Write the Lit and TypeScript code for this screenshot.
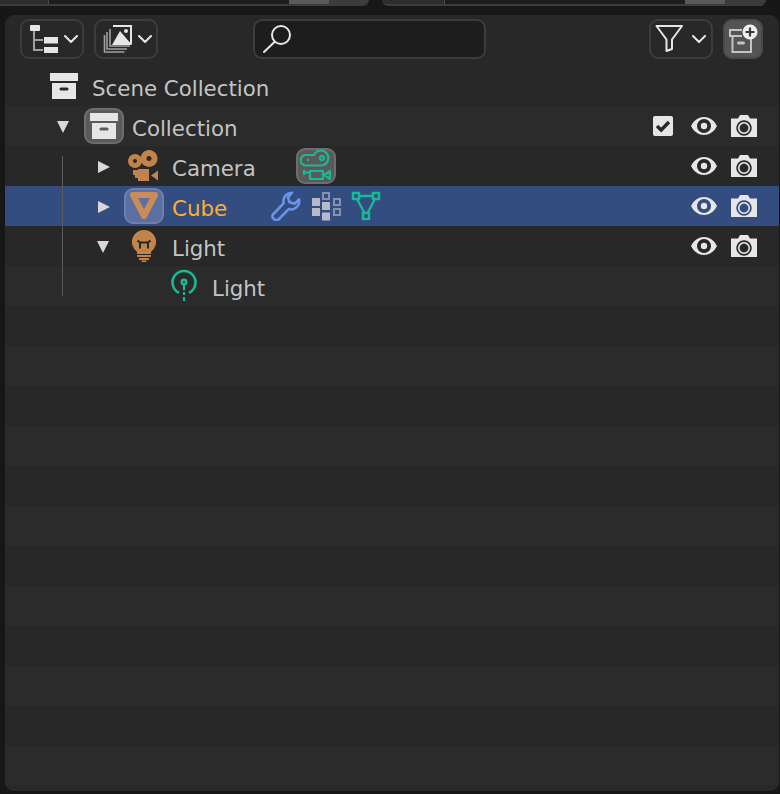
import { LitElement, html, css } from "lit";
import { customElement } from "lit/decorators.js";

const LIGHT = "#e6e6e6";
const ORANGE = "#c0834a";
const TEAL = "#1ab894";

const box = () => html`<svg class="ic" viewBox="0 0 28 26"><path fill="${LIGHT}" d="M0 0h28v8H0z"/><path fill="${LIGHT}" fill-rule="evenodd" d="M2 10h24v16H2z M11 14.500a1.500 1.500 0 0 0 0 3h6a1.500 1.500 0 0 0 0-3z"/></svg>`;

const camera = html`<svg class="ic" viewBox="0 0 32 32"><g fill="${ORANGE}" fill-rule="evenodd"><path d="M7 4a7 7 0 1 0 .01 0z M7 9a2 2 0 1 1-.01 0z"/><path d="M21 0a8.500 8.500 0 1 0 .01 0z M21 6a2.500 2.500 0 1 1-.01 0z"/><path d="M5 20h5v-1h11v12H10v-3H7v-3H5z"/><path d="M30 20.500v10l-7-5z"/></g></svg>`;

const cubeMesh = html`<svg class="ic" viewBox="0 0 32 32"><path fill="none" stroke="#cc8c58" stroke-width="6" stroke-linejoin="round" d="M5 5h22L16 26z"/></svg>`;

const bulb = html`<svg class="ic" viewBox="0 0 26 32"><path fill="${ORANGE}" d="M13 0a12 12 0 0 1 7 21.800V24H6v-2.200A12 12 0 0 1 13 0z"/><path fill="none" stroke="#282828" stroke-width="2" d="M6.500 10.500l2.500 2h8l2.500-2M9 12.500v6M17 12.500v6"/><path fill="${ORANGE}" d="M6 25h14v2H6zM8 28h10v2H8zM10.500 30.500h5V32h-5z"/></svg>`;

const lightData = html`<svg class="ic" viewBox="0 0 28 34"><g fill="none" stroke="${TEAL}" stroke-width="2.600"><path d="M9 23.800a11.500 11.500 0 1 1 10 0"/><circle cx="14" cy="13" r="2.200"/><path d="M14 16v5" stroke-width="2"/><path d="M14 23v3M14 28v4" stroke-width="2"/></g></svg>`;

const cameraData = html`<svg class="ic" viewBox="0 0 32 32"><g fill="none" stroke="${TEAL}" stroke-width="2.200" stroke-linejoin="round"><path d="M6 5H14A7.500 7.500 0 1 1 21 15.500H6A5.200 5.200 0 0 1 6 5z"/><circle cx="22" cy="8" r="2"/><path d="M4 20v5M4 22.500h6"/><rect x="10" y="21" width="13" height="8"/><path d="M30 21v8l-5.500-4z"/></g><circle cx="8" cy="10" r="1.200" fill="${TEAL}"/></svg>`;

const wrench = html`<svg class="ic" viewBox="0 0 30 30"><path fill="none" stroke="#6c93e6" stroke-width="2.600" stroke-linejoin="round" d="M19 2a8 8 0 0 1 2-.3l-4 4.600 1.500 5 5 1.500 4.500-4.500a8.200 8.200 0 0 1-10.300 9.800L8 28a3.800 3.800 0 0 1-6-4.500l10.700-11.300A8.200 8.200 0 0 1 19 2z"/></svg>`;

const modifiers = html`<svg class="ic" viewBox="0 0 30 30"><g fill="#b4bac8"><rect x="1" y="7" width="8" height="8"/><rect x="1" y="17" width="8" height="8"/><rect x="11" y="11" width="8" height="8"/><rect x="11" y="21.500" width="8" height="8"/></g><g fill="none" stroke="#8692b0" stroke-width="2"><rect x="12" y="2" width="6" height="6"/><rect x="23" y="8" width="6" height="6"/><rect x="23" y="18" width="6" height="6"/></g></svg>`;

const meshData = html`<svg class="ic" viewBox="0 0 30 30"><g fill="none" stroke="${TEAL}" stroke-width="2.400"><rect x="2" y="2" width="6" height="6"/><rect x="22" y="2" width="6" height="6"/><rect x="12" y="22" width="6" height="6"/><path d="M8 5h14M6 8l7.500 14M24 8l-7.500 14"/></g></svg>`;

const eye = html`<svg class="ic" viewBox="0 0 26 18"><path fill="${LIGHT}" fill-rule="evenodd" d="M0 9C3 3 8 0 13 0s10 3 13 9c-3 6-8 9-13 9S3 15 0 9z M13 2a7 7 0 1 0 .01 0z"/><circle cx="13" cy="9" r="3.200" fill="${LIGHT}"/></svg>`;

const shot = html`<svg class="ic" viewBox="0 0 26 22"><path fill="${LIGHT}" fill-rule="evenodd" d="M0 3.500h7L9 0h8l2 3.500h7V22H0z M13 5.300a7.700 7.700 0 1 0 .01 0z M13 7a6 6 0 1 1-.01 0z M13 8.600a4.400 4.400 0 1 0 .01 0z"/></svg>`;

const check = html`<svg class="ic" viewBox="0 0 20 20"><rect width="20" height="20" rx="2" fill="${LIGHT}"/><path fill="none" stroke="#282828" stroke-width="3.400" d="M4 10l4.200 4L16 6"/></svg>`;

const chev = html`<svg class="chev" viewBox="0 0 14 8"><path fill="none" stroke="${LIGHT}" stroke-width="2" stroke-linecap="round" stroke-linejoin="round" d="M1 1l6 6 6-6"/></svg>`;

type Row = {
  indent: number;
  twist?: "open" | "closed";
  icon: unknown;
  iw: number;
  ih: number;
  active?: boolean;
  label: string;
  lw?: number;
  sel?: boolean;
  extras?: unknown;
  rest?: unknown;
};

const vis = html`<span class="ctl eye">${eye}</span><span class="ctl shot">${shot}</span>`;

const rows: Row[] = [
  { indent: 0, icon: box(), iw: 28, ih: 26, label: "Scene Collection" },
  {
    indent: 1, twist: "open", icon: box(), iw: 28, ih: 26, active: true, label: "Collection",
    rest: html`<span class="ctl check">${check}</span>${vis}`,
  },
  {
    indent: 2, twist: "closed", icon: camera, iw: 32, ih: 32, label: "Camera", lw: 84,
    extras: html`<span class="extra act">${cameraData}</span>`, rest: vis,
  },
  {
    indent: 2, twist: "closed", icon: cubeMesh, iw: 32, ih: 32, active: true, label: "Cube", lw: 54, sel: true,
    extras: html`<span class="extra">${wrench}</span><span class="extra">${modifiers}</span><span class="extra">${meshData}</span>`,
    rest: vis,
  },
  { indent: 2, twist: "open", icon: bulb, iw: 26, ih: 32, label: "Light", rest: vis },
  { indent: 3, icon: lightData, iw: 28, ih: 34, label: "Light" },
];

@customElement("app-root")
export class AppRoot extends LitElement {
  static styles = css`
    :host {
      display: block;
      width: 780px;
      height: 794px;
      background: #171717;
      overflow: hidden;
      font-family: "DejaVu Sans", sans-serif;
    }
    .top {
      display: flex;
      height: 6px;
    }
    .tab {
      height: 6px;
      display: flex;
      box-sizing: border-box;
      border-bottom: 2px solid #3c3c3c;
      border-radius: 0 0 8px 8px;
      overflow: hidden;
      flex: none;
    }
    .tab.a { width: 369px; margin-right: 13px; border-radius: 0 0 8px 0; }
    .tab.b { width: 384px; }
    .seg { display: block; height: 100%; flex: none; }
    .seg.lt { background: #2e2e2e; border-right: 1px solid #4a4a4a; box-sizing: border-box; }
    .seg.dk { background: #1d1d1d; }
    .seg.th { background: #5a5a5a; width: 40px; }
    .seg.en { background: #3c3c3c; flex: 1; }
    .panel {
      margin: 9px 0 0 5px;
      width: 774px;
      height: 776px;
      background: #282828;
      border-radius: 9px;
      overflow: hidden;
      display: flex;
      flex-direction: column;
    }
    .header {
      display: flex;
      align-items: flex-start;
      height: 51px;
      padding: 4px 16px 0 15px;
      box-sizing: border-box;
      flex: none;
    }
    .btn {
      box-sizing: border-box;
      height: 40px;
      border: 2px solid #3c3c3c;
      border-radius: 9px;
      display: flex;
      align-items: center;
      background: #282828;
    }
    .b1 { width: 64px; padding-left: 7px; gap: 5px; }
    .b2 { width: 64px; margin-left: 10px; padding-left: 7px; gap: 5px; }
    .search {
      box-sizing: border-box;
      width: 233px;
      height: 40px;
      margin-left: 95px;
      background: #1d1d1d;
      border: 2px solid #3c3c3c;
      border-radius: 9px;
      padding-left: 8px;
      display: flex;
      align-items: center;
    }
    .spacer { flex: 1; }
    .b3 { width: 64px; padding-left: 4px; gap: 7px; }
    .b4 {
      width: 40px;
      margin-left: 10px;
      background: #545454;
      border-color: #4a4a4a;
      justify-content: center;
    }
    .chev { width: 14px; height: 8px; flex: none; }
    .ic { display: block; width: 100%; height: 100%; }
    .hi { display: block; flex: none; }
    .tree {
      position: relative;
      flex: 1;
      background: repeating-linear-gradient(180deg, #282828 0 40px, #2b2b2b 40px 80px);
    }
    .row {
      height: 40px;
      display: flex;
      align-items: center;
      padding-right: 22px;
      box-sizing: border-box;
      font-size: 21.33px;
      color: #c4c4c4;
    }
    .row.sel { background: #334d80; }
    .tw {
      flex: none;
      display: flex;
      justify-content: flex-end;
    }
    .twist {
      width: 40px;
      flex: none;
      display: flex;
      justify-content: center;
    }
    .tri-c {
      width: 0;
      height: 0;
      border-left: 12px solid #d8d8d8;
      border-top: 6px solid transparent;
      border-bottom: 6px solid transparent;
      margin-top: 2px;
    }
    .tri-o {
      width: 0;
      height: 0;
      border-top: 12px solid #d8d8d8;
      border-left: 6px solid transparent;
      border-right: 6px solid transparent;
      margin: 2px 2px 0 0;
    }
    .iconcell {
      width: 40px;
      height: 40px;
      flex: none;
      display: flex;
      align-items: center;
      justify-content: center;
      box-sizing: border-box;
    }
    .iconcell.active > .iw {
      width: 40px;
      height: 36px;
      box-sizing: border-box;
      border: 2px solid #6e6e6e;
      background: #5a5a5a;
      border-radius: 9px;
      display: flex;
      align-items: center;
      justify-content: center;
    }
    .row.sel .iconcell.active > .iw {
      background: #5b70a0;
      border-color: #6c80ae;
    }
    .iw2 { display: block; }
    .label { margin: 4px 0 0 8px; white-space: nowrap; flex: none; }
    .label.o { color: #ffaf29; }
    .extras { display: flex; margin-left: 40px; }
    .extra {
      width: 40px;
      height: 40px;
      box-sizing: border-box;
      padding: 5px;
      display: block;
    }
    .extra.act {
      height: 36px;
      margin: 2px 0;
      padding: 0;
      background: #5a5a5a;
      border: 2px solid #6e6e6e;
      border-radius: 9px;
    }
    .rest {
      margin-left: auto;
      display: flex;
      align-items: center;
      gap: 14px;
    }
    .ctl { display: block; }
    .check { width: 20px; height: 20px; margin-right: 4px; }
    .eye { width: 26px; height: 18px; }
    .shot { width: 26px; height: 22px; }
    .guide {
      position: absolute;
      left: 57px;
      top: 90px;
      width: 1px;
      height: 140px;
      background: #5a5a5a;
    }
  `;

  private row(r: Row) {
    return html`<div class="row ${r.sel ? "sel" : ""}">
      <span class="tw" style="width:${r.indent * 40 + 39}px">
        ${r.twist
          ? html`<span class="twist"><span class="${r.twist === "open" ? "tri-o" : "tri-c"}"></span></span>`
          : ""}
      </span>
      <span class="iconcell ${r.active ? "active" : ""}">
        <span class="iw"><span class="iw2" style="width:${r.iw}px;height:${r.ih}px">${r.icon}</span></span>
      </span>
      <span class="label ${r.sel ? "o" : ""}" style="${r.lw ? `width:${r.lw}px` : ""}">${r.label}</span>
      ${r.extras ? html`<span class="extras">${r.extras}</span>` : ""}
      ${r.rest ? html`<span class="rest">${r.rest}</span>` : ""}
    </div>`;
  }

  render() {
    return html`
      <div class="top">
        <div class="tab a">
          <span class="seg lt" style="width:49px"></span>
          <span class="seg dk" style="width:240px"></span>
          <span class="seg th"></span>
          <span class="seg en"></span>
        </div>
        <div class="tab b">
          <span class="seg lt" style="width:63px"></span>
          <span class="seg dk" style="width:240px"></span>
          <span class="seg th"></span>
          <span class="seg en"></span>
        </div>
      </div>
      <div class="panel">
        <div class="header">
          <div class="btn b1">
            <svg class="hi" width="30" height="30" viewBox="0 0 30 30">
              <rect x="1" y="1" width="10" height="6" rx="1" fill="${LIGHT}"/>
              <path d="M5 7v19h9M5 16h9" fill="none" stroke="#a0a0a0" stroke-width="2"/>
              <rect x="15" y="13" width="14" height="6.500" fill="${LIGHT}"/>
              <rect x="15" y="23" width="14" height="6" fill="${LIGHT}"/>
            </svg>
            ${chev}
          </div>
          <div class="btn b2">
            <svg class="hi" width="30" height="30" viewBox="0 0 30 30">
              <path fill="none" stroke="#a0a0a0" stroke-width="1.600" d="M1.500 11v17h20M4 8v17h20M7 5v17h20"/>
              <path fill="#282828" d="M9 1h20v20H9z"/>
              <path fill="none" stroke="${LIGHT}" stroke-width="2" d="M10 2h18v18"/>
              <path fill="${LIGHT}" d="M9 21L17 7l12 14z"/>
              <circle cx="23" cy="7" r="2" fill="${LIGHT}"/>
            </svg>
            ${chev}
          </div>
          <div class="search">
            <svg class="hi" width="30" height="30" viewBox="0 0 30 30">
              <circle cx="18" cy="11" r="9" fill="none" stroke="${LIGHT}" stroke-width="2"/>
              <path d="M11.500 18L1 28" stroke="${LIGHT}" stroke-width="2" stroke-linecap="round"/>
            </svg>
          </div>
          <div class="spacer"></div>
          <div class="btn b3">
            <svg class="hi" width="30" height="30" viewBox="0 0 30 30">
              <path fill="none" stroke="${LIGHT}" stroke-width="2" stroke-linejoin="round" d="M1.500 2H27L17 15.500V25l-5.500 2V15.500z"/>
            </svg>
            ${chev}
          </div>
          <div class="btn b4">
            <svg class="hi" width="30" height="30" viewBox="0 0 30 30">
              <path fill="none" stroke="#c4c4c4" stroke-width="2" d="M14 6H2v6h12M4.500 12v16H23V14"/>
              <rect x="9" y="17.500" width="8" height="3" rx="1.500" fill="#c4c4c4"/>
              <circle cx="22" cy="8" r="7.500" fill="#f0f0f0"/>
              <path d="M22 3.500v9M17.500 8h9" stroke="#3a3a3a" stroke-width="2.200"/>
            </svg>
          </div>
        </div>
        <div class="tree">
          ${rows.map((r) => this.row(r))}
          <div class="guide"></div>
        </div>
      </div>
    `;
  }
}
